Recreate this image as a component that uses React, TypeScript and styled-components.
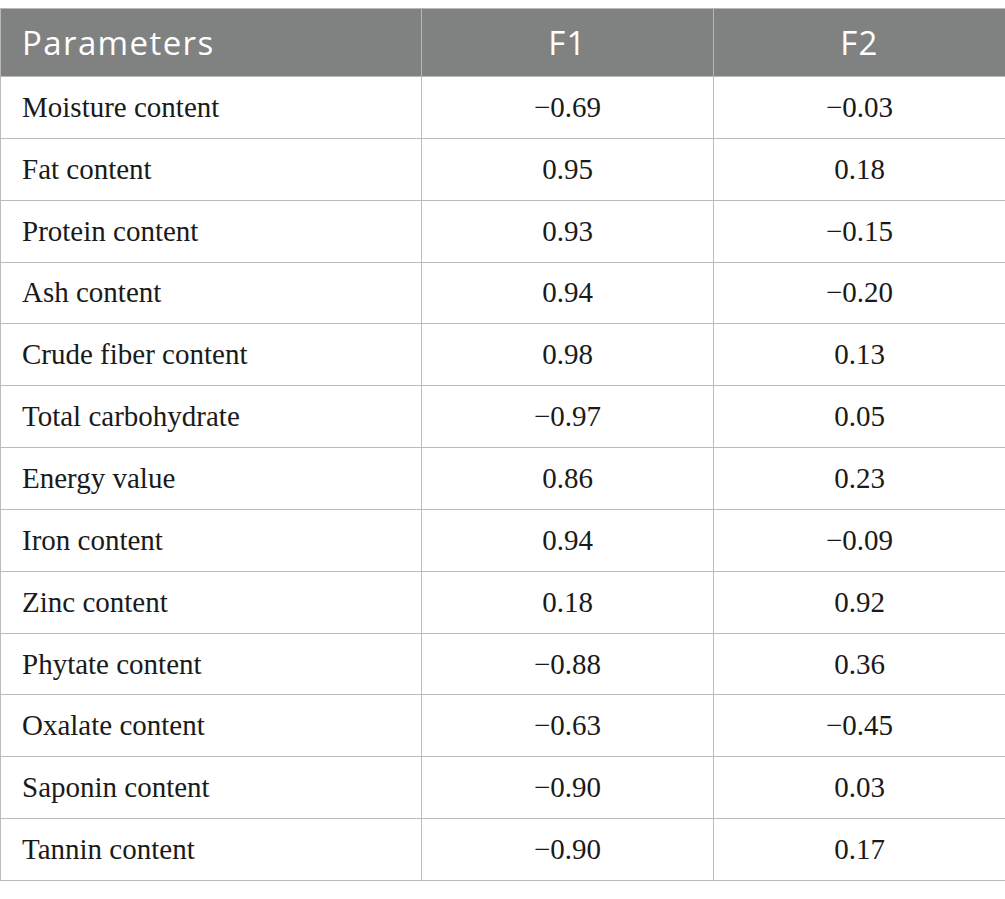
import React from "react";
import styled, { createGlobalStyle } from "styled-components";

const Global = createGlobalStyle`
  html, body { margin: 0; padding: 0; background: #ffffff; }
  body { width: 1005px; }
`;

const Page = styled.div`
  padding-top: 8px;
  width: 1005px;
`;

const Table = styled.table`
  width: 1005px;
  border-collapse: collapse;
  table-layout: fixed;
`;

const HeadCell = styled.th<{ $align?: "left" | "center" }>`
  background: #808281;
  color: #ffffff;
  font-family: "Open Sans", "Liberation Sans", sans-serif;
  font-weight: 400;
  font-size: 33px;
  letter-spacing: 1.4px;
  height: 68px;
  padding: 0 0 0 ${(p) => (p.$align === "left" ? "21px" : "0")};
  text-align: ${(p) => p.$align ?? "center"};
  border: 1px solid #b8b8b8;
  box-sizing: border-box;
  line-height: 1;
`;

const Cell = styled.td<{ $align?: "left" | "center" }>`
  font-family: "Liberation Serif", "Times New Roman", serif;
  font-size: 29px;
  color: #1a1a1a;
  height: 61.85px;
  padding: 0 0 0 ${(p) => (p.$align === "left" ? "21px" : "0")};
  text-align: ${(p) => p.$align ?? "center"};
  border: 1px solid #bcbcbc;
  box-sizing: border-box;
  line-height: 1;
  vertical-align: middle;
`;

const rows: [string, string, string][] = [
  ["Moisture content", "\u22120.69", "\u22120.03"],
  ["Fat content", "0.95", "0.18"],
  ["Protein content", "0.93", "\u22120.15"],
  ["Ash content", "0.94", "\u22120.20"],
  ["Crude fiber content", "0.98", "0.13"],
  ["Total carbohydrate", "\u22120.97", "0.05"],
  ["Energy value", "0.86", "0.23"],
  ["Iron content", "0.94", "\u22120.09"],
  ["Zinc content", "0.18", "0.92"],
  ["Phytate content", "\u22120.88", "0.36"],
  ["Oxalate content", "\u22120.63", "\u22120.45"],
  ["Saponin content", "\u22120.90", "0.03"],
  ["Tannin content", "\u22120.90", "0.17"],
];

export default function App() {
  return (
    <Page>
      <Global />
      <Table>
        <colgroup>
          <col style={{ width: 421 }} />
          <col style={{ width: 292 }} />
          <col style={{ width: 292 }} />
        </colgroup>
        <thead>
          <tr>
            <HeadCell $align="left">Parameters</HeadCell>
            <HeadCell>F1</HeadCell>
            <HeadCell>F2</HeadCell>
          </tr>
        </thead>
        <tbody>
          {rows.map((r) => (
            <tr key={r[0]}>
              <Cell $align="left">{r[0]}</Cell>
              <Cell>{r[1]}</Cell>
              <Cell>{r[2]}</Cell>
            </tr>
          ))}
        </tbody>
      </Table>
    </Page>
  );
}
